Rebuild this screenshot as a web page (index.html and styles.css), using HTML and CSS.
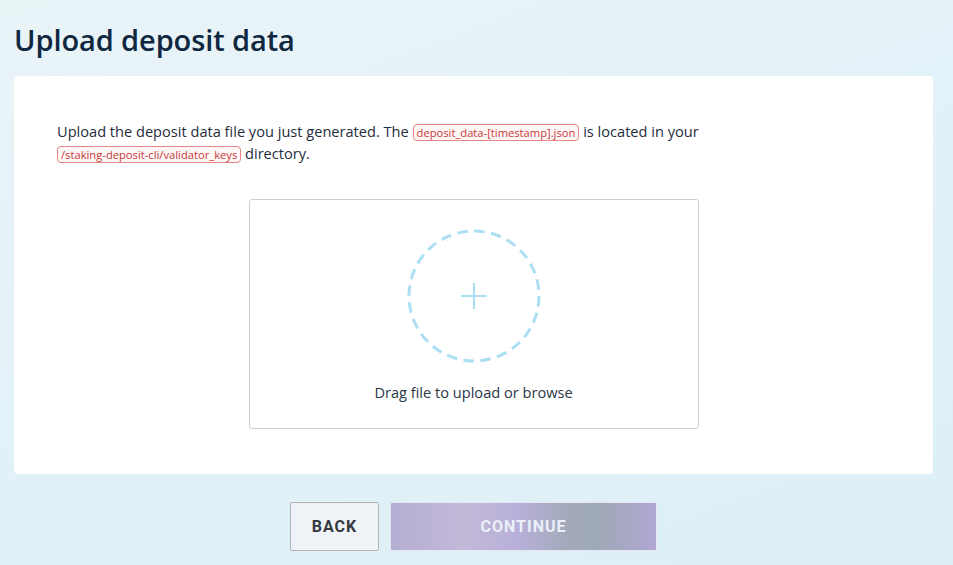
FILE: index.html
```html
<!DOCTYPE html>
<html lang="en">
<head>
<meta charset="utf-8">
<title>Upload deposit data</title>
<link rel="stylesheet" href="styles.css">
</head>
<body>
<main class="page">
  <h1 class="title">Upload deposit data</h1>
  <section class="card">
    <p class="intro">Upload the deposit data file you just generated. The <code class="tag">deposit_data-[timestamp].json</code> is located in your <code class="tag">/staking-deposit-cli/validator_keys</code> directory.</p>
    <div class="dropzone">
      <svg class="drop-icon" width="134" height="134" viewBox="0 0 134 134" aria-hidden="true">
        <circle cx="67" cy="67" r="65" fill="none" stroke="#acdff4" stroke-width="3" stroke-dasharray="10.5 6.5"/>
        <path d="M54 67H80M67 54V80" stroke="#acdff4" stroke-width="2.2" fill="none"/>
      </svg>
      <div class="drop-text">Drag file to upload or browse</div>
    </div>
  </section>
  <div class="actions">
    <button class="btn btn-back">BACK</button>
    <button class="btn btn-continue" disabled>CONTINUE</button>
  </div>
</main>
</body>
</html>
```

FILE: styles.css
```css
html, body {
  margin: 0;
  padding: 0;
  height: 100%;
}
body {
  background: linear-gradient(160deg, #e9f4f7 0%, #e3f1f8 45%, #dceff7 100%);
  font-family: "Open Sans", "Noto Sans", sans-serif;
  color: #1c2a3a;
}
.page {
  width: 919px;
  margin-left: 14px;
  padding-top: 20px;
}
.title {
  margin: 0 0 17px 0;
  font-size: 29px;
  line-height: 39px;
  font-weight: 600;
  color: #0f2740;
  letter-spacing: -0.1px;
}
.card {
  background: #ffffff;
  border-radius: 4px;
  padding: 44px 43px 45px 43px;
  display: flex;
  flex-direction: column;
  align-items: center;
}
.intro {
  align-self: stretch;
  max-width: 680px;
  margin: 0 0 35px 0;
  font-size: 14.6px;
  line-height: 22px;
  color: #1f2d3d;
}
.tag {
  font-family: "Open Sans", "Noto Sans", sans-serif;
  font-size: 11.2px;
  line-height: 14px;
  color: #c33b3b;
  background: #fff6f6;
  border: 1px solid #e58585;
  border-radius: 4px;
  padding: 0 3px;
  white-space: nowrap;
}
.dropzone {
  width: 448px;
  border: 1px solid #cfcfd2;
  border-radius: 3px;
  display: flex;
  flex-direction: column;
  align-items: center;
  padding-top: 29px;
  box-sizing: content-box;
  height: 199px;
}
.drop-icon {
  display: block;
}
.drop-text {
  margin-top: 18px;
  font-size: 14.6px;
  line-height: 22px;
  color: #2a3646;
}
.actions {
  display: flex;
  justify-content: center;
  gap: 11px;
  margin-top: 28px;
}
.btn {
  font-family: Roboto, "Liberation Sans", sans-serif;
  font-weight: 700;
  font-size: 16px;
  letter-spacing: 1px;
  height: 49px;
  border-radius: 2px;
  cursor: pointer;
}
.btn-back {
  width: 89px;
  background: #eff3f8;
  border: 1px solid #b3b3b3;
  color: #333a40;
}
.btn-continue {
  width: 267px;
  border: 1px solid #e8e6f2;
  color: #ebf0f8;
  background: linear-gradient(90deg, #b4afd3 0%, #c3b8d8 28%, #b8b0da 48%, #a3aabb 66%, #9fa9b6 78%, #b0a6d3 100%);
}
```
